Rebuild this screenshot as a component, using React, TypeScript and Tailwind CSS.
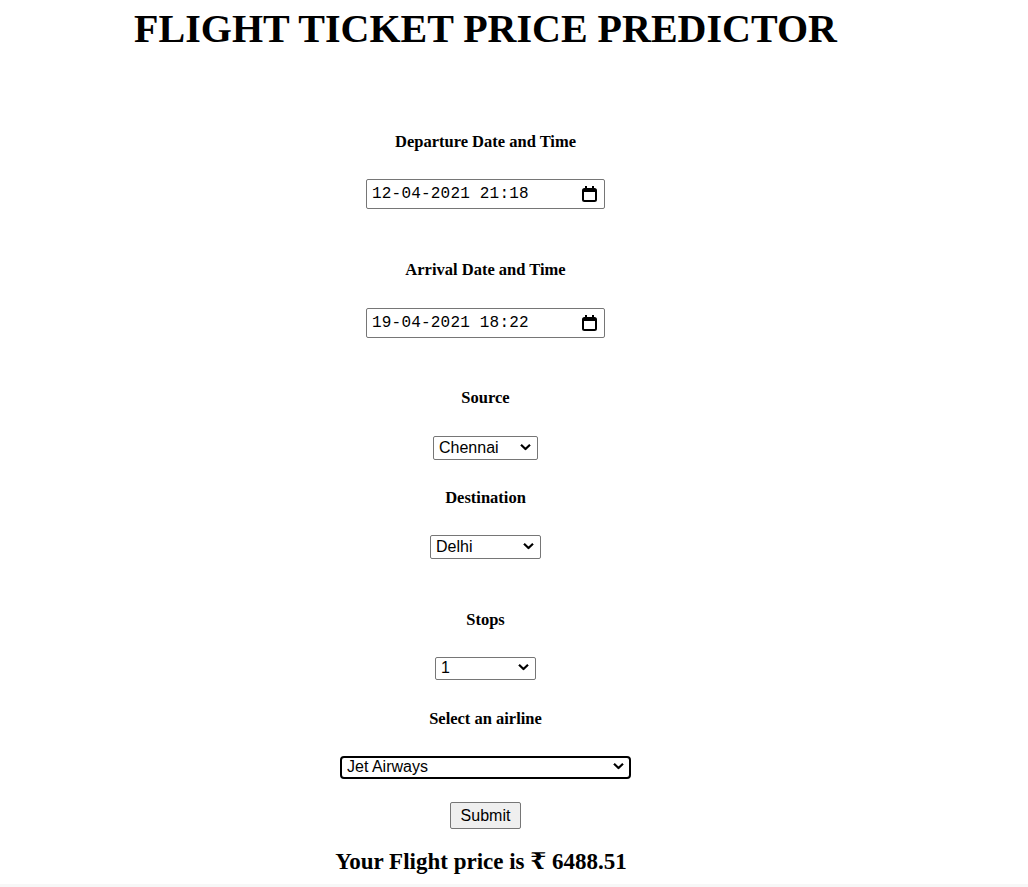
import { useState } from 'react';

function CalendarIcon() {
  return (
    <svg width="15" height="16" viewBox="0 0 15 16" className="shrink-0">
      <rect x="3" y="0" width="2" height="3" fill="#000" />
      <rect x="10" y="0" width="2" height="3" fill="#000" />
      <rect x="1" y="3" width="13" height="12" rx="1.5" fill="none" stroke="#000" strokeWidth="2" />
      <rect x="1" y="3" width="13" height="3" fill="#000" />
    </svg>
  );
}

function Chevron() {
  return (
    <svg
      width="11"
      height="7"
      viewBox="0 0 11 7"
      className="pointer-events-none absolute right-[7px] top-1/2 -translate-y-1/2"
    >
      <path d="M1 1.2 L5.5 5.5 L10 1.2" fill="none" stroke="#000" strokeWidth="2.2" />
    </svg>
  );
}

function DateBox({ value, className }: { value: string; className: string }) {
  return (
    <div
      className={`flex h-[30px] w-[239px] items-center justify-between rounded-[2px] border border-[#767676] bg-white pl-[5px] pr-[7px] ${className}`}
    >
      <span className="font-['Liberation_Mono',monospace] text-[16px] tracking-[0.2px] text-black">{value}</span>
      <CalendarIcon />
    </div>
  );
}

function Picker({
  options,
  value,
  onChange,
  className,
  focused
}: {
  options: string[];
  value: string;
  onChange: (v: string) => void;
  className: string;
  focused?: boolean;
}) {
  return (
    <div className={`relative ${className}`}>
      <select
        value={value}
        onChange={(e) => onChange(e.target.value)}
        className={`h-full w-full appearance-none bg-white pl-[5px] font-['Liberation_Sans',Arial,sans-serif] text-[16px] leading-none text-black outline-none ${
          focused ? 'rounded-[4px] border-2 border-black pl-[4px]' : 'rounded-[2px] border border-[#767676]'
        }`}
      >
        {options.map((o) => (
          <option key={o} value={o}>
            {o}
          </option>
        ))}
      </select>
      <Chevron />
    </div>
  );
}

const cities = ['Banglore', 'Chennai', 'Delhi', 'Kolkata', 'Mumbai'];
const destinations = ['Cochin', 'Delhi', 'Hyderabad', 'Kolkata', 'New Delhi', 'Banglore'];
const stops = ['0', '1', '2', '3', '4'];
const airlines = ['Jet Airways', 'IndiGo', 'Air India', 'Multiple carriers', 'SpiceJet', 'Vistara', 'Air Asia', 'GoAir'];

export default function App() {
  const [source, setSource] = useState('Chennai');
  const [dest, setDest] = useState('Delhi');
  const [stop, setStop] = useState('1');
  const [airline, setAirline] = useState('Jet Airways');

  const label = "block h-5 font-['Liberation_Serif',serif] text-[16.5px] leading-5 font-bold text-black";

  return (
    <div className="flex h-[887px] w-full flex-col bg-white">
      <div className="flex w-[971px] flex-col items-center">
        <h1 className="mt-[9px] font-['Liberation_Serif',serif] text-[40px] leading-none font-bold text-black">
          FLIGHT TICKET PRICE PREDICTOR
        </h1>

        <label className={`${label} mt-[83px]`}>Departure Date and Time</label>
        <DateBox value="12-04-2021 21:18" className="mt-[27px]" />

        <label className={`${label} mt-[51px]`}>Arrival Date and Time</label>
        <DateBox value="19-04-2021 18:22" className="mt-[28px]" />

        <label className={`${label} mt-[50px]`}>Source</label>
        <Picker options={cities} value={source} onChange={setSource} className="mt-[27px] h-[24px] w-[105px]" />

        <label className={`${label} mt-[29px]`}>Destination</label>
        <Picker options={destinations} value={dest} onChange={setDest} className="mt-[26px] h-[24px] w-[111px]" />

        <label className={`${label} mt-[52px]`}>Stops</label>
        <Picker options={stops} value={stop} onChange={setStop} className="mt-[25px] h-[23px] w-[101px]" />

        <label className={`${label} mt-[31px]`}>Select an airline</label>
        <Picker
          options={airlines}
          value={airline}
          onChange={setAirline}
          className="mt-[25px] h-[23px] w-[291px]"
          focused
        />

        <button
          type="submit"
          className="mt-[25px] h-[27px] w-[71px] rounded-[2px] border border-[#767676] bg-[#efefef] font-['Liberation_Sans',Arial,sans-serif] text-[16px] text-black"
        >
          Submit
        </button>

        <h2 className="mt-[19px] pr-[9px] font-['Liberation_Serif','DejaVu_Serif',serif] text-[23px] leading-[28px] font-bold text-black">
          Your Flight price is ₹ 6488.51
        </h2>
      </div>
      <div className="mt-auto h-[3px] w-full bg-[#f7f7f7]" />
    </div>
  );
}
